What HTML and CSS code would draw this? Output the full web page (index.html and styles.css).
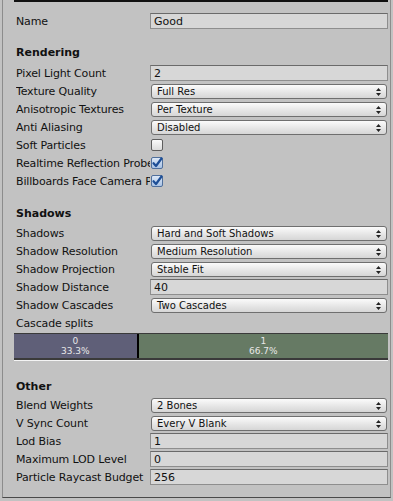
FILE: index.html
```html
<!DOCTYPE html>
<html>
<head>
<meta charset="utf-8">
<link rel="stylesheet" href="styles.css">
</head>
<body>
<div class="panel">
  <div class="topbar"></div>
  <div class="row name-row"><span class="label">Name</span><span class="field text">Good</span></div>

  <div class="header first">Rendering</div>
  <div class="row"><span class="label">Pixel Light Count</span><span class="field text">2</span></div>
  <div class="row"><span class="label">Texture Quality</span><span class="field popup">Full Res<svg class="arrows" width="5" height="8" viewBox="0 0 5 8"><path d="M2.5 0L5 3H0z M2.5 8L5 5H0z" fill="#222"/></svg></span></div>
  <div class="row"><span class="label">Anisotropic Textures</span><span class="field popup">Per Texture<svg class="arrows" width="5" height="8" viewBox="0 0 5 8"><path d="M2.5 0L5 3H0z M2.5 8L5 5H0z" fill="#222"/></svg></span></div>
  <div class="row"><span class="label">Anti Aliasing</span><span class="field popup">Disabled<svg class="arrows" width="5" height="8" viewBox="0 0 5 8"><path d="M2.5 0L5 3H0z M2.5 8L5 5H0z" fill="#222"/></svg></span></div>
  <div class="row"><span class="label">Soft Particles</span><span class="check"></span></div>
  <div class="row"><span class="label">Realtime Reflection Probes</span><span class="check on"><svg width="12" height="12" viewBox="0 0 12 12"><path d="M2.5 6.2L5 9L10.5 1.5" fill="none" stroke="#1d4e96" stroke-width="2.2" stroke-linecap="round" stroke-linejoin="round"/></svg></span></div>
  <div class="row"><span class="label">Billboards Face Camera Position</span><span class="check on"><svg width="12" height="12" viewBox="0 0 12 12"><path d="M2.5 6.2L5 9L10.5 1.5" fill="none" stroke="#1d4e96" stroke-width="2.2" stroke-linecap="round" stroke-linejoin="round"/></svg></span></div>

  <div class="header shadows">Shadows</div>
  <div class="row"><span class="label">Shadows</span><span class="field popup">Hard and Soft Shadows<svg class="arrows" width="5" height="8" viewBox="0 0 5 8"><path d="M2.5 0L5 3H0z M2.5 8L5 5H0z" fill="#222"/></svg></span></div>
  <div class="row"><span class="label">Shadow Resolution</span><span class="field popup">Medium Resolution<svg class="arrows" width="5" height="8" viewBox="0 0 5 8"><path d="M2.5 0L5 3H0z M2.5 8L5 5H0z" fill="#222"/></svg></span></div>
  <div class="row"><span class="label">Shadow Projection</span><span class="field popup">Stable Fit<svg class="arrows" width="5" height="8" viewBox="0 0 5 8"><path d="M2.5 0L5 3H0z M2.5 8L5 5H0z" fill="#222"/></svg></span></div>
  <div class="row"><span class="label">Shadow Distance</span><span class="field text">40</span></div>
  <div class="row"><span class="label">Shadow Cascades</span><span class="field popup">Two Cascades<svg class="arrows" width="5" height="8" viewBox="0 0 5 8"><path d="M2.5 0L5 3H0z M2.5 8L5 5H0z" fill="#222"/></svg></span></div>
  <div class="row"><span class="label">Cascade splits</span></div>
  <div class="cascades">
    <div class="seg seg0" style="width:33.3%"><span>0</span><span>33.3%</span></div>
    <div class="seg seg1"><span>1</span><span>66.7%</span></div>
  </div>

  <div class="header other">Other</div>
  <div class="row"><span class="label">Blend Weights</span><span class="field popup">2 Bones<svg class="arrows" width="5" height="8" viewBox="0 0 5 8"><path d="M2.5 0L5 3H0z M2.5 8L5 5H0z" fill="#222"/></svg></span></div>
  <div class="row"><span class="label">V Sync Count</span><span class="field popup">Every V Blank<svg class="arrows" width="5" height="8" viewBox="0 0 5 8"><path d="M2.5 0L5 3H0z M2.5 8L5 5H0z" fill="#222"/></svg></span></div>
  <div class="row"><span class="label">Lod Bias</span><span class="field text">1</span></div>
  <div class="row"><span class="label">Maximum LOD Level</span><span class="field text">0</span></div>
  <div class="row"><span class="label">Particle Raycast Budget</span><span class="field text">256</span></div>
</div>
</body>
</html>
```

FILE: styles.css
```css
html, body {
  margin: 0;
  padding: 0;
  background: #c2c2c2;
}
body {
  width: 393px;
  height: 501px;
  overflow: hidden;
  font-family: "DejaVu Sans", "Lucida Grande", sans-serif;
  font-size: 11px;
  color: #111;
}
.panel {
  position: relative;
  box-sizing: border-box;
  height: 498px;
  margin-left: 2px;
  width: 389px;
  border-left: 1px solid #8c8c8c;
  border-right: 1px solid #8c8c8c;
  border-bottom: 1px solid #4a4a4a;
}
.topbar {
  height: 2px;
  margin-left: 11px;
  width: 374px;
  background: #111;
  margin-bottom: 10px;
}
.row {
  display: flex;
  align-items: center;
  height: 18px;
  padding-left: 13px;
}
.label {
  width: 134px;
  flex: none;
  white-space: nowrap;
  overflow: hidden;
  letter-spacing: -0.15px;
}
.header {
  height: 18px;
  line-height: 18px;
  padding-left: 13px;
  font-weight: bold;
}
.header.first { margin-top: 14px; margin-bottom: 2px; }
.header.shadows { margin-top: 15px; margin-bottom: 1px; }
.header.other { margin-top: 18px; margin-bottom: 0; }
.field {
  box-sizing: border-box;
  width: 238px;
  height: 16px;
  flex: none;
  display: flex;
  align-items: center;
}
.text {
  background: #d7d7d7;
  border: 1px solid #8e8e8e;
  border-top-color: #6a6a6a;
  padding-left: 3px;
  font-size: 11px;
  color: #111;
}
.popup {
  margin-left: 1px;
  width: 236px;
  height: 15px;
  border: 1px solid #6f6f6f;
  border-radius: 3px;
  background: linear-gradient(#fbfbfb, #e4e4e4 60%, #d6d6d6);
  padding-left: 5px;
  font-size: 10px;
  font-weight: 500;
  color: #111;
  position: relative;
}
.arrows {
  position: absolute;
  right: 5px;
  top: 3px;
}
.check {
  box-sizing: border-box;
  width: 12px;
  height: 12px;
  margin-left: 1px;
  border: 1px solid #5e5e5e;
  border-radius: 2px;
  background: linear-gradient(#fafafa, #dcdcdc);
  position: relative;
}
.check.on {
  background: linear-gradient(#dce8f7, #a9c2e4);
  border-color: #4f6f9c;
}
.check svg {
  position: absolute;
  left: -1px;
  top: -1px;
}
.cascades {
  display: flex;
  margin-left: 11px;
  width: 374px;
  height: 27px;
  box-sizing: border-box;
  border-top: 1px solid #3a3a3a;
  border-bottom: 2px solid #3a3a3a;
  box-shadow: 0 1px 0 #f4f4f4;
  margin-top: 1px;
}
.seg {
  display: flex;
  flex-direction: column;
  align-items: center;
  justify-content: center;
  color: #e8e8e8;
  font-family: "DejaVu Sans", sans-serif;
  font-size: 9px;
  line-height: 10px;
}
.seg0 {
  background: #5f5f78;
  border-right: 2px solid #000;
  box-sizing: border-box;
}
.seg1 {
  flex: 1;
  background: #667a64;
}
```
